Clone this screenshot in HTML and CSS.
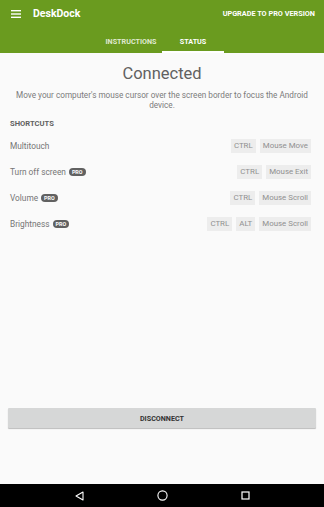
FILE: index.html
```html
<!DOCTYPE html>
<html>
<head>
<meta charset="utf-8">
<link rel="stylesheet" href="styles.css">
</head>
<body>
<div class="screen">
  <header class="appbar">
    <div class="toolbar">
      <svg class="menu" width="10" height="8" viewBox="0 0 10 8"><rect x="0" y="0" width="10" height="1.4" fill="#fff"/><rect x="0" y="3.3" width="10" height="1.4" fill="#fff"/><rect x="0" y="6.6" width="10" height="1.4" fill="#fff"/></svg>
      <span class="title">DeskDock</span>
      <span class="upgrade">UPGRADE TO PRO VERSION</span>
    </div>
    <nav class="tabs">
      <div class="tab">INSTRUCTIONS</div>
      <div class="tab active">STATUS</div>
    </nav>
  </header>
  <main class="content">
    <h1 class="status">Connected</h1>
    <p class="desc">Move your computer's mouse cursor over the screen border to focus the Android device.</p>
    <h2 class="section">SHORTCUTS</h2>
    <div class="rows">
      <div class="row">
        <span class="label">Multitouch</span>
        <span class="keys"><span class="key">CTRL</span><span class="key">Mouse Move</span></span>
      </div>
      <div class="row">
        <span class="label">Turn off screen <span class="pro">PRO</span></span>
        <span class="keys"><span class="key">CTRL</span><span class="key">Mouse Exit</span></span>
      </div>
      <div class="row">
        <span class="label">Volume <span class="pro">PRO</span></span>
        <span class="keys"><span class="key">CTRL</span><span class="key">Mouse Scroll</span></span>
      </div>
      <div class="row">
        <span class="label">Brightness <span class="pro">PRO</span></span>
        <span class="keys"><span class="key">CTRL</span><span class="key">ALT</span><span class="key">Mouse Scroll</span></span>
      </div>
    </div>
    <button class="disconnect">DISCONNECT</button>
  </main>
  <footer class="navbar">
    <svg width="9" height="10" viewBox="0 0 9 10"><path d="M8 1 L1 5 L8 9 Z" fill="none" stroke="#fff" stroke-width="1.1" stroke-linejoin="round"/></svg>
    <svg width="11" height="11" viewBox="0 0 11 11"><circle cx="5.5" cy="5.5" r="4.6" fill="none" stroke="#fff" stroke-width="1.1"/></svg>
    <svg width="9" height="9" viewBox="0 0 9 9"><rect x="1" y="1" width="7" height="7" fill="none" stroke="#fff" stroke-width="1.2"/></svg>
  </footer>
</div>
</body>
</html>
```
FILE: styles.css
```css
* { box-sizing: border-box; margin: 0; padding: 0; }
html, body { width: 324px; height: 507px; overflow: hidden; }
body { font-family: Roboto, "Noto Sans", sans-serif; background: #fafafa; }
.screen { display: flex; flex-direction: column; height: 507px; }
.appbar { background: #6a9b1f; color: #fff; height: 53px; display: flex; flex-direction: column; }
.toolbar { height: 27px; display: flex; align-items: center; padding: 0 9px 0 11px; }
.menu { display: block; margin-right: 12px; margin-top: 1px; }
.title { font-size: 10.5px; font-weight: 700; flex: 1; }
.upgrade { font-size: 7.3px; font-weight: 700; }
.tabs { flex: 1; display: flex; justify-content: center; }
.tab { width: 62px; display: flex; align-items: center; justify-content: center; font-size: 7.2px; font-weight: 700; color: rgba(255,255,255,0.8); border-bottom: 2px solid transparent; padding-top: 4px; }
.tab.active { color: #fff; border-bottom-color: #fff; }
.content { flex: 1; display: flex; flex-direction: column; padding: 0 10px; }
.status { font-size: 16.5px; font-weight: 400; color: #616161; text-align: center; margin-top: 11px; line-height: 20px; }
.desc { font-size: 8.2px; color: #7a7a7a; text-align: center; line-height: 10px; margin-top: 6px; margin-left: -4px; margin-right: -4px; }
.section { font-size: 7.6px; font-weight: 700; color: #616161; margin-top: 9px; line-height: 10px; }
.rows { display: flex; flex-direction: column; margin-top: 4px; }
.row { height: 26px; display: flex; align-items: center; justify-content: space-between; padding-right: 3px; }
.label { font-size: 8.3px; color: #757575; display: flex; align-items: center; gap: 3px; }
.pro { display: inline-block; background: #616161; color: #fff; font-size: 5.4px; font-weight: 700; border-radius: 4px; padding: 1px 3px; line-height: 6px; }
.keys { display: flex; gap: 4px; }
.key { background: #ededed; color: #909090; font-size: 7.9px; height: 14px; line-height: 14px; padding: 0 3px; }
.disconnect { margin-top: auto; margin-bottom: 56px; margin-left: -2px; margin-right: -2px; height: 20px; border: none; background: #d6d7d7; box-shadow: 0 1px 1px rgba(0,0,0,0.25); font-family: Roboto, sans-serif; font-size: 7.2px; font-weight: 700; color: #333; border-radius: 1px; }
.navbar { height: 23px; background: #000; display: flex; align-items: center; justify-content: center; gap: 73px; }
.navbar svg { display: block; }
```
